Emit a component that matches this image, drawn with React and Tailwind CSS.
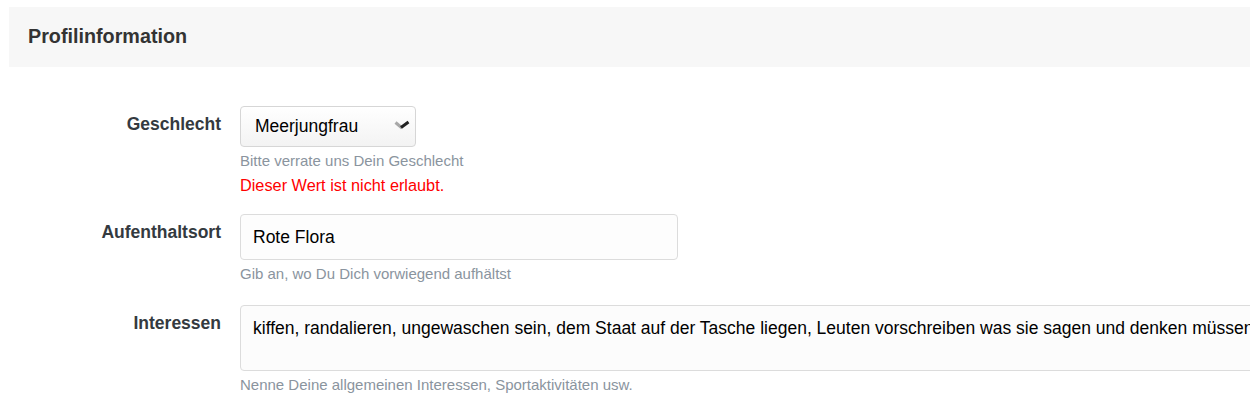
import React, { useState } from "react";

const font = { fontFamily: '"Liberation Sans", Arial, sans-serif' };

function Row({ label, children }) {
  return (
    <div className="flex">
      <label className="w-[231px] shrink-0 pt-[8px] pr-[19px] text-right text-[17.5px] leading-[20px] font-bold text-[#343a40]">
        {label}
      </label>
      <div className="flex flex-col">{children}</div>
    </div>
  );
}

function Help({ children, className = "" }) {
  return (
    <p className={`text-[15px] leading-[20px] text-[#8a949e] ${className}`}>
      {children}
    </p>
  );
}

export default function App() {
  const [gender, setGender] = useState("Meerjungfrau");
  const [place, setPlace] = useState("Rote Flora");
  const [interests, setInterests] = useState(
    "kiffen, randalieren, ungewaschen sein, dem Staat auf der Tasche liegen, Leuten vorschreiben was sie sagen und denken müssen"
  );

  return (
    <div className="w-full overflow-hidden bg-white" style={font}>
      <div className="w-[1320px] pl-[9px] pt-[7px]">
        <div className="h-[60px] flex items-center px-[19px] bg-[#f7f7f7]">
          <h2 className="text-[19.75px] font-bold text-[#333]">Profilinformation</h2>
        </div>

        <div className="pt-[39px] flex flex-col">
          <Row label="Geschlecht">
            <div className="relative w-[176px]">
              <select
                value={gender}
                onChange={(e) => setGender(e.target.value)}
                className="appearance-none w-full h-[41px] pl-[14px] pr-[30px] text-[17.5px] text-black rounded-[4px] border border-[#d6d6d6] bg-gradient-to-b from-white to-[#f3f3f3] outline-none"
              >
                <option>Meerjungfrau</option>
                <option>Weiblich</option>
                <option>Männlich</option>
              </select>
              {/* chevron with soft grey left arm */}
              <svg
                className="absolute right-[6px] top-[14px] pointer-events-none"
                width="16"
                height="10"
                viewBox="0 0 16 10"
              >
                <path d="M1.5 2.5 L8 8" fill="none" stroke="#a8a8a8" strokeWidth="3" />
                <path d="M7 7.5 L14.5 2" fill="none" stroke="#222" strokeWidth="3" />
              </svg>
            </div>
            <Help className="mt-[4px]">Bitte verrate uns Dein Geschlecht</Help>
            <p className="text-[16.3px] leading-[22px] text-[#ff0000] mt-[3px]">
              Dieser Wert ist nicht erlaubt.
            </p>
          </Row>

          <div className="h-[18px]" />

          <Row label="Aufenthaltsort">
            <input
              value={place}
              onChange={(e) => setPlace(e.target.value)}
              className="w-[438px] h-[46px] px-[12px] text-[17.5px] text-black rounded-[4px] border border-[#dcdcdc] bg-[#fdfdfd] outline-none"
            />
            <Help className="mt-[4px]">Gib an, wo Du Dich vorwiegend aufhältst</Help>
          </Row>

          <div className="h-[21px]" />

          <Row label="Interessen">
            <textarea
              wrap="off"
              value={interests}
              onChange={(e) => setInterests(e.target.value)}
              className="w-[1060px] h-[66px] px-[12px] pt-[12px] text-[17.5px] leading-[20px] text-black rounded-[4px] border border-[#dcdcdc] bg-[#fcfcfc] outline-none resize-none overflow-hidden"
            />
            <Help className="mt-[4px]">
              Nenne Deine allgemeinen Interessen, Sportaktivitäten usw.
            </Help>
          </Row>
        </div>
      </div>
    </div>
  );
}
